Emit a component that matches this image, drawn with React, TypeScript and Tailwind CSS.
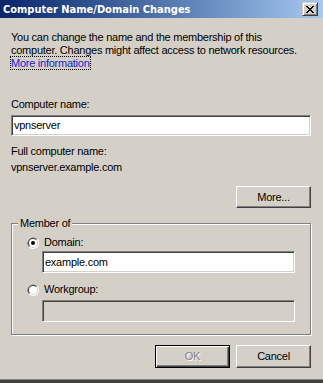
import React from 'react'

function Radio({ checked }: { checked?: boolean }) {
  return (
    <svg width="12" height="12" viewBox="0 0 12 12" className="shrink-0">
      <circle cx="6" cy="6" r="6" fill="#ffffff" />
      <path d="M1.76 10.24 A6 6 0 0 1 10.24 1.76 Z" fill="#808080" />
      <circle cx="6" cy="6" r="5" fill="#d4d0c8" />
      <path d="M2.46 9.54 A5 5 0 0 1 9.54 2.46 Z" fill="#404040" />
      <circle cx="6" cy="6" r="4" fill="#ffffff" />
      {checked && <circle cx="6" cy="6" r="2" fill="#000000" />}
    </svg>
  )
}

function CloseGlyph() {
  return (
    <svg width="8" height="7" viewBox="0 0 8 7" shapeRendering="crispEdges">
      <path
        d="M0 0h2v1H0zM6 0h2v1H6zM1 1h2v1H1zM5 1h2v1H5zM2 2h4v1H2zM3 3h2v1H3zM2 4h4v1H2zM1 5h2v1H1zM5 5h2v1H5zM0 6h2v1H0zM6 6h2v1H6z"
        fill="#000000"
      />
    </svg>
  )
}

export default function App() {
  return (
    <div className="flex h-[383px] w-[323px] flex-col overflow-hidden bg-[#d4d0c8] font-['Liberation_Sans',Arial,sans-serif] text-[11px] leading-[13px] tracking-[-0.25px] text-black">
      {/* title bar */}
      <div className="flex h-[18px] shrink-0 items-center justify-between bg-gradient-to-r from-[#0a246a] to-[#a6caf0] pl-[3px] pr-[5px]">
        <span className="font-['DejaVu_Sans_Condensed','DejaVu_Sans',sans-serif] text-[11px] font-bold tracking-normal text-white">
          Computer Name/Domain Changes
        </span>
        <button
          type="button"
          className="flex h-[14px] w-[16px] items-center justify-center border border-t-[#d4d0c8] border-l-[#d4d0c8] border-r-[#404040] border-b-[#404040] bg-[#d4d0c8] shadow-[inset_1px_1px_0_#ffffff,inset_-1px_-1px_0_#808080]"
        >
          <CloseGlyph />
        </button>
      </div>

      <div className="flex flex-col pl-[11px] pr-[12px]">
        <p className="mt-[13px] whitespace-nowrap">
          You can change the name and the membership of this
          <br />
          computer. Changes might affect access to network resources.
          <br />
          <a className="text-[#1a1ac8] outline-1 outline-dotted outline-black">More information</a>
        </p>

        <p className="mt-[28px]">Computer name:</p>
        <div className="mt-[4px] flex h-[21px] items-center border border-t-[#808080] border-l-[#808080] border-r-white border-b-white bg-white pl-[2px] shadow-[inset_1px_1px_0_#404040,inset_-1px_-1px_0_#d4d0c8]">
          vpnserver
        </div>

        <p className="mt-[9px]">Full computer name:</p>
        <p className="mt-[3px]">vpnserver.example.com</p>

        <button
          type="button"
          className="mt-[12px] h-[22px] w-[75px] self-end border border-t-white border-l-white border-r-[#404040] border-b-[#404040] shadow-[inset_-1px_-1px_0_#808080]"
        >
          More...
        </button>

        <div className="relative mt-[15px] w-[300px] border border-[#808080] pb-[12px] pl-[15px] pt-[12px] shadow-[1px_1px_0_#ffffff,inset_1px_1px_0_#ffffff]">
          <span className="absolute left-[6px] top-[-7px] bg-[#d4d0c8] px-[2px]">Member of</span>

          <div className="flex h-[13px] items-center gap-[5px]">
            <Radio checked />
            <span>Domain:</span>
          </div>
          <div className="ml-[15px] mt-[2px] flex h-[22px] w-[253px] items-center border border-t-[#808080] border-l-[#808080] border-r-white border-b-white bg-white pl-[2px] shadow-[inset_1px_1px_0_#404040,inset_-1px_-1px_0_#d4d0c8]">
            example.com
          </div>

          <div className="mt-[10px] flex h-[13px] items-center gap-[5px]">
            <Radio />
            <span>Workgroup:</span>
          </div>
          <div className="ml-[15px] mt-[4px] h-[22px] w-[253px] border border-t-[#808080] border-l-[#808080] border-r-white border-b-white bg-[#d4d0c8] shadow-[inset_1px_1px_0_#404040,inset_-1px_-1px_0_#d4d0c8]" />
        </div>

        <div className="mt-[10px] flex justify-end gap-[6px]">
          <button
            type="button"
            disabled
            className="h-[23px] w-[75px] border border-black text-[#808080] shadow-[inset_1px_1px_0_#ffffff,inset_-1px_-1px_0_#404040,inset_-2px_-2px_0_#808080] [text-shadow:1px_1px_0_#ffffff]"
          >
            OK
          </button>
          <button
            type="button"
            className="h-[23px] w-[75px] border border-t-white border-l-white border-r-[#404040] border-b-[#404040] shadow-[inset_-1px_-1px_0_#808080]"
          >
            Cancel
          </button>
        </div>
      </div>

      <div className="mt-auto h-[4px] shrink-0 border-t border-[#808080] bg-[#404040]" />
    </div>
  )
}
